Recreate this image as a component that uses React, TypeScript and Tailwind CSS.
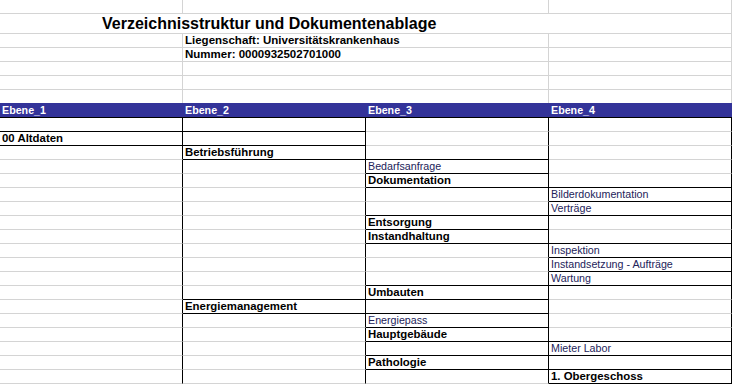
type Cell = { t?: string; b?: boolean } | null;

// 19 data rows under the header; any non-null cell gets a black box
const DATA: Cell[][] = [
  [null, {}, null, null],
  [{ t: '00 Altdaten', b: true }, {}, null, null],
  [null, { t: 'Betriebsführung', b: true }, null, null],
  [null, null, { t: 'Bedarfsanfrage' }, null],
  [null, null, { t: 'Dokumentation', b: true }, null],
  [null, null, null, { t: 'Bilderdokumentation' }],
  [null, null, null, { t: 'Verträge' }],
  [null, null, { t: 'Entsorgung', b: true }, null],
  [null, null, { t: 'Instandhaltung', b: true }, null],
  [null, null, null, { t: 'Inspektion' }],
  [null, null, null, { t: 'Instandsetzung - Aufträge' }],
  [null, null, null, { t: 'Wartung' }],
  [null, null, { t: 'Umbauten', b: true }, null],
  [null, { t: 'Energiemanagement', b: true }, null, null],
  [null, null, { t: 'Energiepass' }, null],
  [null, null, { t: 'Hauptgebäude', b: true }, null],
  [null, null, null, { t: 'Mieter Labor' }],
  [null, null, { t: 'Pathologie', b: true }, null],
  [null, null, null, { t: '1. Obergeschoss', b: true }],
];

const HEADERS = ['Ebene_1', 'Ebene_2', 'Ebene_3', 'Ebene_4'];

function TopRow({ children, last }: { children?: React.ReactNode; last?: boolean }) {
  return (
    <div className={`flex h-[14px] ${last ? '' : 'border-b border-b-[#d4d4d4]'}`}>
      {children}
    </div>
  );
}

function EmptyTop({ last }: { last?: boolean }) {
  return (
    <TopRow last={last}>
      <div className="w-[183px] border-r border-r-[#d4d4d4]" />
      <div className="w-[366px] border-r border-r-[#d4d4d4]" />
      <div className="w-[183px] border-r border-r-[#d4d4d4]" />
    </TopRow>
  );
}

export default function App() {
  return (
    <div className="w-[732px] h-[384px] overflow-hidden bg-white text-black font-['Liberation_Sans',Arial,sans-serif]">
      {/* Title block */}
      <EmptyTop />
      <div className="flex h-[20px] border-b border-b-[#d4d4d4]">
        <div className="w-[549px] flex items-end pl-[102px]">
          <span className="text-[16px] leading-[19px] font-bold whitespace-nowrap">Verzeichnisstruktur und Dokumentenablage</span>
        </div>
        <div className="w-[183px] border-r border-r-[#d4d4d4]" />
      </div>
      <TopRow>
        <div className="w-[183px] border-r border-r-[#d4d4d4]" />
        <div className="w-[366px] border-r border-r-[#d4d4d4] flex items-end pl-[2px]">
          <span className="text-[11.5px] leading-[13px] font-bold whitespace-nowrap">Liegenschaft: Universitätskrankenhaus</span>
        </div>
        <div className="w-[183px] border-r border-r-[#d4d4d4]" />
      </TopRow>
      <TopRow>
        <div className="w-[183px] border-r border-r-[#d4d4d4]" />
        <div className="w-[366px] border-r border-r-[#d4d4d4] flex items-end pl-[2px]">
          <span className="text-[11.5px] leading-[13px] font-bold whitespace-nowrap">Nummer: 0000932502701000</span>
        </div>
        <div className="w-[183px] border-r border-r-[#d4d4d4]" />
      </TopRow>
      <EmptyTop />
      <EmptyTop />
      <div className="flex h-[13px]">
        <div className="w-[183px] border-r border-r-[#d4d4d4]" />
        <div className="w-[366px] border-r border-r-[#d4d4d4]" />
        <div className="w-[183px] border-r border-r-[#d4d4d4]" />
      </div>

      {/* Header band */}
      <div className="flex h-[15px] bg-[#333399] border-b border-b-black">
        {HEADERS.map(h => (
          <div key={h} className="w-[183px] flex items-end pl-[2px]">
            <span className="text-[10.7px] leading-[14px] font-bold text-white">{h}</span>
          </div>
        ))}
      </div>

      {/* Folder tree */}
      {DATA.map((row, r) => (
        <div key={r} className="flex h-[14px]">
          {row.map((cell, c) => {
            const below = DATA[r + 1]?.[c];
            const black = cell !== null || (below !== undefined && below !== null);
            return (
              <div
                key={c}
                className={`w-[183px] border-r border-r-black border-b flex items-end pl-[2px] overflow-visible ${
                  black ? 'border-b-black' : 'border-b-[#d4d4d4]'
                }`}
              >
                {cell?.t && (
                  <span
                    className={`whitespace-nowrap leading-[13px] ${
                      cell.b ? 'text-[11.4px] font-bold text-black' : 'text-[10.7px] text-[#23235a]'
                    }`}
                  >
                    {cell.t}
                  </span>
                )}
              </div>
            );
          })}
        </div>
      ))}
    </div>
  );
}
